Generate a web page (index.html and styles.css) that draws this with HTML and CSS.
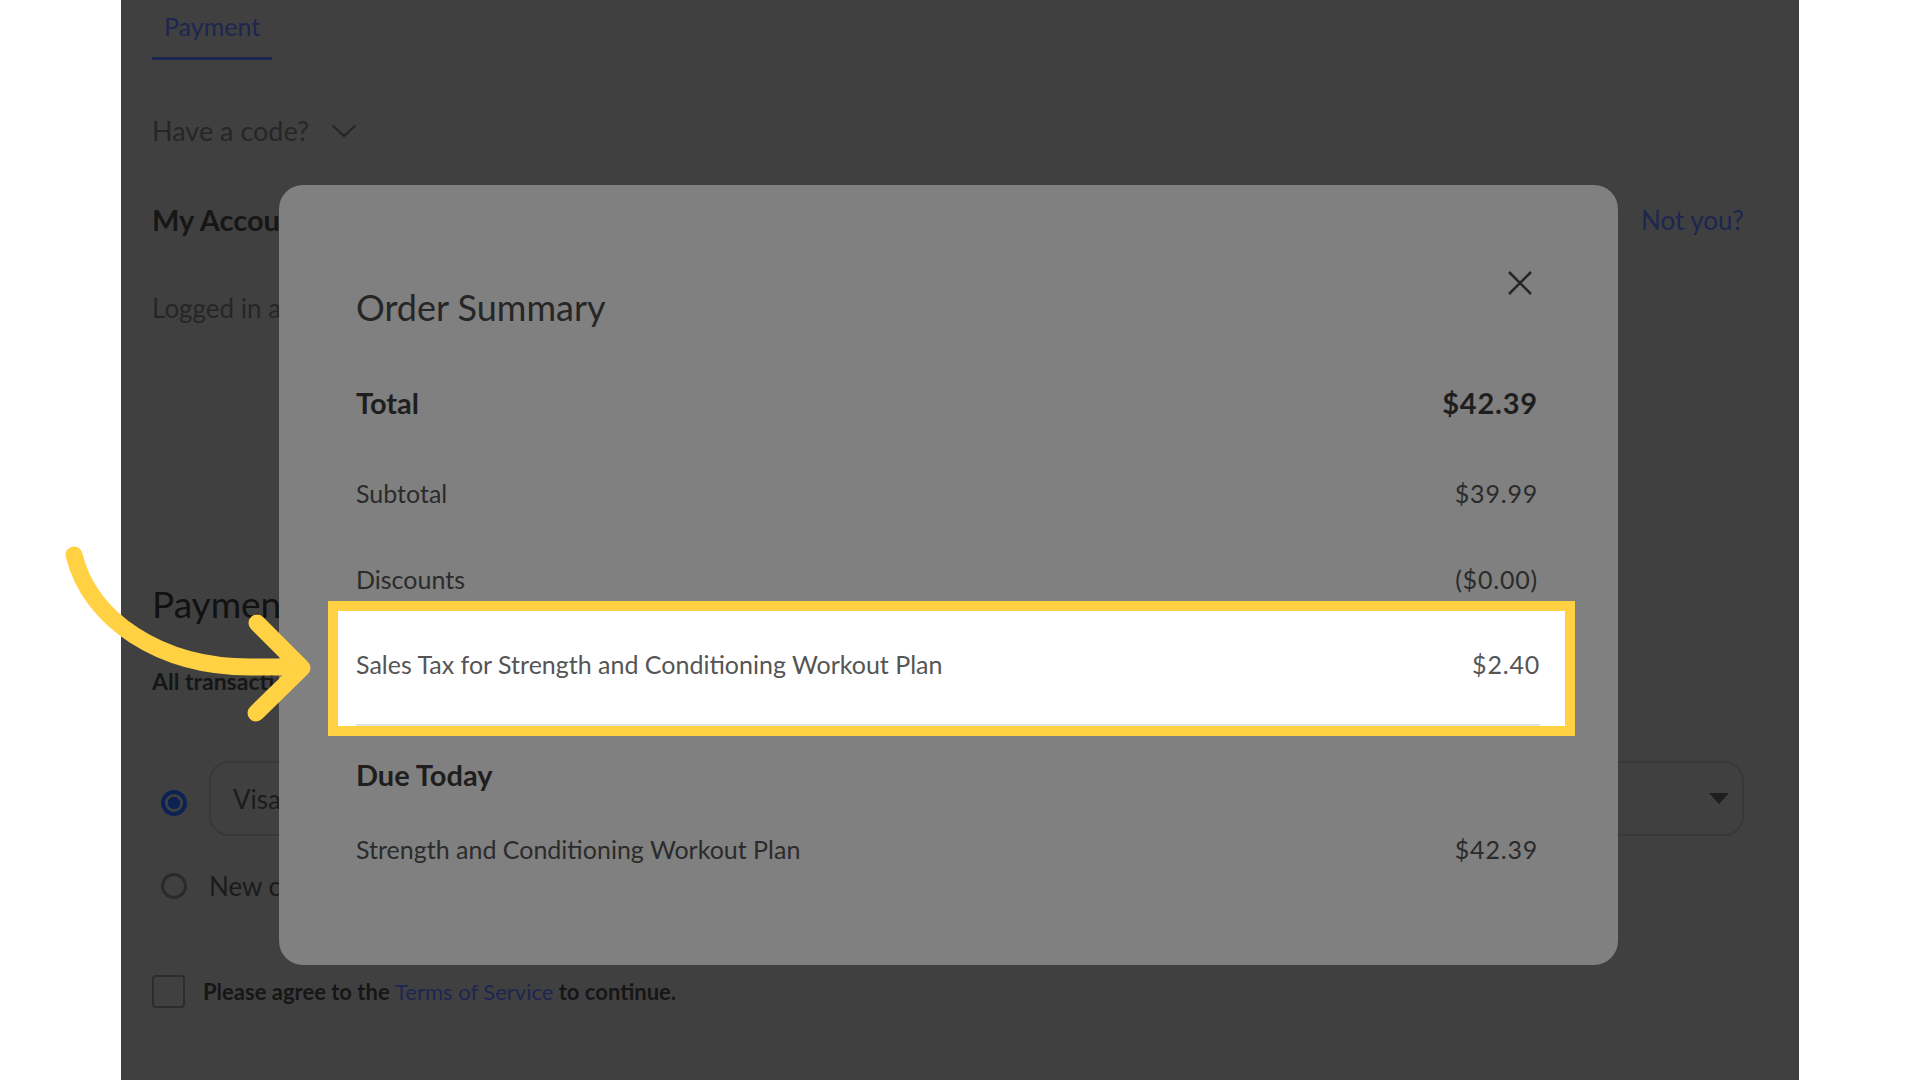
FILE: index.html
```html
<!DOCTYPE html>
<html>
  <head>
    <title>Checkout - Order Summary</title>
    <link rel="stylesheet" href="styles.css">
  </head>
  <body>
    <div class="seite">
      <div class="tabs">
        <span class="tab aktiv">Payment</span>
      </div>

      <div class="code">
        Have a code?
        <svg class="chevron" width="26" height="14" viewBox="0 0 26 14">
          <path d="M1.5 1.5 L13 12 L24.5 1.5" fill="none" stroke="#262626" stroke-width="2.2"/>
        </svg>
      </div>

      <div class="konto-kopf">
        <h2>My Account</h2>
        <a class="link">Not you?</a>
      </div>
      <p class="eingeloggt">Logged in as</p>

      <h2 class="zahlung-titel">Payment</h2>
      <p class="hinweis">All transactions</p>

      <div class="option">
        <span class="radio an"></span>
        <div class="auswahl">
          <span>Visa</span>
          <span class="dreieck"></span>
        </div>
      </div>
      <div class="option option-neu">
        <span class="radio"></span>
        <span>New card</span>
      </div>

      <div class="agb">
        <span class="checkbox"></span>
        <span>Please agree to the <a class="link">Terms of Service</a> to continue.</span>
      </div>
    </div>

    <div class="modal">
      <svg class="schliessen" width="26" height="26" viewBox="0 0 26 26">
        <path d="M2 2 L24 24 M24 2 L2 24" stroke="#262626" stroke-width="2.6" fill="none"/>
      </svg>
      <h1 class="modal-titel">Order Summary</h1>

      <div class="zeile zeile-total"><span>Total</span><span class="betrag">$42.39</span></div>
      <div class="zeile"><span>Subtotal</span><span class="betrag">$39.99</span></div>
      <div class="zeile"><span>Discounts</span><span class="betrag">($0.00)</span></div>
      <div class="markiert">
        <div class="zeile"><span>Sales Tax for Strength and Conditioning Workout Plan</span><span class="betrag">$2.40</span></div>
      </div>
      <div class="faellig">Due Today</div>
      <div class="zeile zeile-letzte"><span>Strength and Conditioning Workout Plan</span><span class="betrag">$42.39</span></div>
    </div>

    <svg class="pfeil" width="1920" height="1080" viewBox="0 0 1920 1080">
      <path d="M74 555 C90 620 160 667 250 667 L298 667" fill="none" stroke="#ffd143" stroke-width="17" stroke-linecap="round"/>
      <path d="M257 623 L302 668 L256 713" fill="none" stroke="#ffd143" stroke-width="17" stroke-linecap="round" stroke-linejoin="round"/>
    </svg>
  </body>
</html>
```

FILE: styles.css
```css
body {
  margin: 0;
  background: #ffffff;
  font-family: Lato, "Open Sans", sans-serif;
}

.seite {
  margin-left: 121px;
  width: 1678px;
  height: 1080px;
  box-sizing: border-box;
  padding: 0 55px 0 31px;
  background-color: #404040;
  color: #1b1b1b;
  overflow: hidden;
}

.tabs {
  display: flex;
}

.tab {
  padding: 10px 12px 15px;
  line-height: 32px;
  font-size: 25px;
  color: #1c2650;
  border-bottom: 3px solid #1c2650;
}

.code {
  display: flex;
  align-items: center;
  gap: 22px;
  margin-top: 55px;
  line-height: 32px;
  font-size: 27px;
  color: #262626;
}

.konto-kopf {
  display: flex;
  justify-content: space-between;
  align-items: center;
  margin-top: 55px;
}

.konto-kopf h2 {
  margin: 0;
  line-height: 36px;
  font-size: 29px;
  font-weight: 700;
  color: #161616;
}

.link {
  color: #1c2650;
  font-size: 26px;
}

.eingeloggt {
  margin: 54px 0 0;
  line-height: 32px;
  font-size: 26px;
  color: #262626;
}

.zahlung-titel {
  margin: 258px 0 0;
  line-height: 44px;
  font-size: 37px;
  font-weight: 400;
  color: #111111;
}

.hinweis {
  margin: 41px 0 0;
  line-height: 28px;
  font-size: 23px;
  font-weight: 700;
  color: #161616;
}

.option {
  display: flex;
  align-items: center;
  gap: 22px;
  margin-top: 66px;
  font-size: 26px;
  color: #1b1b1b;
}

.radio {
  width: 26px;
  height: 26px;
  box-sizing: border-box;
  border: 3px solid #2a2a2a;
  border-radius: 50%;
  margin-left: 9px;
  flex-shrink: 0;
}

.radio.an {
  border: 4px solid #0c2253;
  background: radial-gradient(circle, #0c2253 0 6px, transparent 6.5px);
  margin-top: 8px;
}

.auswahl {
  flex: 1;
  display: flex;
  justify-content: space-between;
  align-items: center;
  height: 75px;
  box-sizing: border-box;
  padding: 0 13px 0 22px;
  border: 2px solid #383838;
  border-radius: 20px;
}

.dreieck {
  width: 0;
  height: 0;
  border-left: 10px solid transparent;
  border-right: 10px solid transparent;
  border-top: 11px solid #1e1e1e;
}

.option-neu {
  margin-top: 36px;
  line-height: 28px;
}

.agb {
  display: flex;
  align-items: center;
  gap: 18px;
  margin-top: 75px;
  font-size: 22px;
  font-weight: 700;
  color: #161616;
}

.agb .link {
  font-size: 22px;
  font-weight: 400;
}

.checkbox {
  width: 33px;
  height: 33px;
  box-sizing: border-box;
  border: 2px solid #2c2c2c;
  border-radius: 4px;
}

/* Modal mit Bestellübersicht */
.modal {
  position: absolute;
  left: 279px;
  top: 185px;
  width: 1339px;
  height: 780px;
  box-sizing: border-box;
  padding: 102px 80px 0 77px;
  background-color: #808080;
  border-radius: 24px;
  color: #2b2b2b;
}

.schliessen {
  position: absolute;
  top: 85px;
  right: 85px;
}

.modal-titel {
  margin: 0 0 27px;
  line-height: 40px;
  font-size: 36px;
  font-weight: 400;
  color: #262626;
}

.zeile {
  display: flex;
  justify-content: space-between;
  align-items: center;
  height: 86px;
  font-size: 25px;
}

.betrag {
  letter-spacing: 0.8px;
}

.zeile-total {
  height: 96px;
  font-size: 29px;
  font-weight: 700;
  color: #1e1e1e;
}

.markiert {
  position: relative;
  margin: -21px -37px -28px -28px;
  padding: 0 25px 0 18px;
  border: 10px solid #ffd143;
  background-color: #ffffff;
}

.markiert .zeile {
  height: 106px;
  padding-bottom: 7px;
  border-bottom: 2px solid #e3e3e3;
  color: #555555;
}

.faellig {
  margin-top: 24px;
  height: 86px;
  line-height: 86px;
  font-size: 29px;
  font-weight: 700;
  color: #1e1e1e;
}

.zeile-letzte {
  height: 62px;
}

.pfeil {
  position: absolute;
  left: 0;
  top: 0;
  pointer-events: none;
}
```
